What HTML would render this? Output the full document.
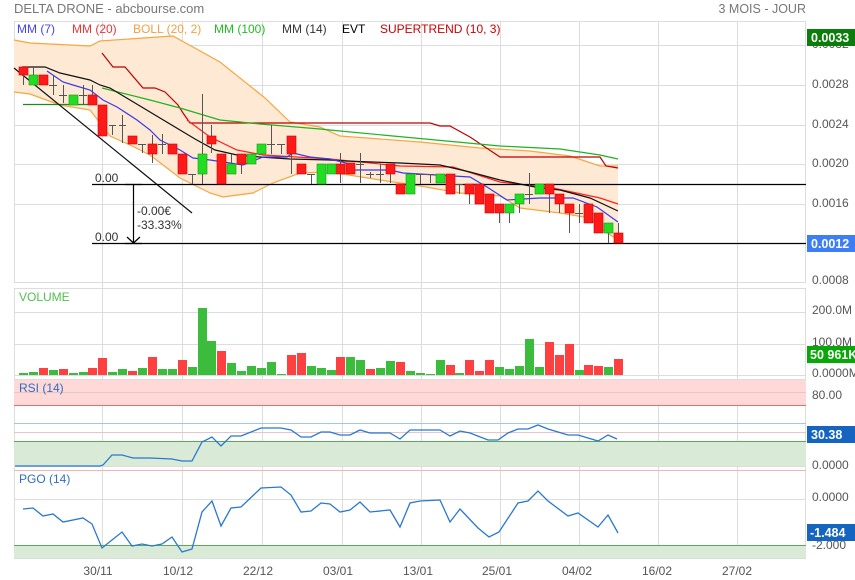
<!DOCTYPE html>
<html><head><meta charset="utf-8"><style>
html,body{margin:0;padding:0;background:#fff;width:855px;height:580px;overflow:hidden}
svg{display:block;font-family:"Liberation Sans",sans-serif}
</style></head><body>
<svg width="855" height="580" viewBox="0 0 855 580" xmlns="http://www.w3.org/2000/svg">
<text x="14" y="13" font-size="13" fill="#777">DELTA DRONE - abcbourse.com</text>
<text x="806" y="13" font-size="12.5" fill="#777" text-anchor="end">3 MOIS - JOUR</text>

<!-- grids -->
<g stroke="#ddd" stroke-width="1" fill="none">
<rect x="14.5" y="21.5" width="791" height="261"/>
<path d="M14 45.5H806M14 85.5H806M14 125.5H806M14 164.5H806M14 204.5H806"/>
<path d="M14 288.5H806M14 312.5H806M14 344.5H806M14 375.5H806"/>
<path d="M14 379.5H806M14 432.5H806M14 466.5H806"/>
<path d="M14 499.5H806M14 558.5H806"/>
<path d="M102.5 21V558M182.5 21V558M262.5 21V558M342.5 21V558M421.5 21V558M500.5 21V558M579.5 21V558M658.5 21V558M737.5 21V558M14.5 288V558M805.5 288V558"/>
</g>

<!-- bollinger -->
<path d="M14,40 30,43 90,46 100,41 173,36 220,62 265,98 290,122 320,127 340,136 420,142 480,148 530,151 570,156 600,166 618,166 L618,240 600,228 590,218 560,213 520,208 500,196 460,193 420,186 380,180 330,172 300,173 273,183 253,193 223,197 210,193 192,184 180,178 150,155 130,145 110,136 100,123 90,110 60,105 30,94 14,92Z" fill="#fde9d4"/>
<g fill="none" stroke-width="1.2">
<polyline stroke="#f7a640" points="14,40 30,43 90,46 100,41 173,36 220,62 265,98 290,122 320,127 340,136 420,142 480,148 530,151 570,156 600,166 618,166"/>
<polyline stroke="#f7a640" points="14,92 30,94 60,105 90,110 100,123 110,136 130,145 150,155 180,178 192,184 210,193 223,197 253,193 273,183 300,173 330,172 380,180 420,186 460,193 500,196 520,208 560,213 590,218 600,228 618,240"/>
<polyline stroke="#c00000" points="102,53 113,67 125,67 143,88 155,88 165,92 178,105 183,113 190,123 430,123 440,126 450,126 470,137 500,157 600,157 606,166 618,168"/>
<polyline stroke="#1fb31f" points="102,88 150,100 180,108 220,120 260,124 320,129 340,131 500,146 560,149 600,155 618,159"/>
<polyline stroke="#ff2020" points="187,120 210,137 237,150 263,155 330,159 400,166 453,167 500,182 553,188 600,198 618,204"/>
<polyline stroke="#111" points="22,67 45,67 60,73 90,80 100,85 110,88 150,112 195,139 215,150 237,155 260,157 290,159 330,160 345,161 400,163 440,165 470,172 500,180 540,188 560,190 590,198 618,211"/>
<polyline stroke="#3a3ae8" points="47,71 63,82 73,85 90,90 103,100 117,107 137,120 150,130 160,140 180,150 193,158 210,160 230,163 243,165 263,157 287,157 293,153 310,157 330,159 350,164 353,170 390,170 403,173 470,177 487,187 507,200 540,198 573,198 597,207 618,222"/>
<line x1="23" y1="104.5" x2="92" y2="104.5" stroke="#1a8a1a"/>
<line x1="14" y1="68" x2="192" y2="213" stroke="#111"/>
<path d="M92 184.5H806M92 243.5H806" stroke="#000" stroke-width="1.2"/>
<path d="M133.5 184V243M125 184.5H142M125 243.5H142M127 237L133.5 243L140 237" stroke="#000"/>
</g>
<text x="95" y="182" font-size="12" fill="#333">0.00</text>
<text x="95" y="241" font-size="12" fill="#333">0.00</text>
<text x="137" y="215" font-size="12" fill="#333">-0.00€</text>
<text x="137" y="229" font-size="12" fill="#333">-33.33%</text>

<!-- candles -->
<g stroke="#555" stroke-width="1">
<path d="M23.5 67V85M33.5 67V85M43.5 75V85M53.5 75V95M63.5 85V103M73.5 95V105M83.5 85V105M92.5 85V105M102.5 105V136M112.5 125V135M122.5 115V143M132.5 136V144M142.5 144V153M152.5 135V163M162.5 134V154M172.5 144V154M182.5 154V174M192.5 174V184M202.5 94V184M211.5 125V153M221.5 154V184M231.5 154V174M241.5 154V174M251.5 154V164M261.5 144V154M271.5 125V154M281.5 144V154M291.5 136V174M301.5 164V174M311.5 174V184M321.5 164V184M331.5 164V174M340.5 153V183M350.5 163V174M360.5 153V183M370.5 172V178M380.5 164V183M390.5 164V183M400.5 184V194M410.5 174V194M420.5 174V184M430.5 174V183M440.5 174V183M450.5 174V194M459.5 184V194M469.5 184V204M479.5 184V204M489.5 194V213M499.5 204V223M509.5 204V223M519.5 194V213M529.5 173V204M539.5 184V194M549.5 184V213M559.5 194V213M569.5 204V233M579.5 204V223M588.5 204V223M598.5 213V233M608.5 223V243M618.5 223V243"/>
<path d="M109 125.5H116M119 125.5H126M138 144.5H146M158 144.5H166M188 174.5H196M267 144.5H275M277 144.5H285M307 174.5H315M356 164.5H364M366 174.5H374M376 174.5H384M416 174.5H424M426 174.5H434M455 184.5H463M525 194.5H533M575 213.5H583M49 85.5H57M59 95.5H67M79 95.5H87"/>
</g>
<g fill="#ff1a1a" stroke="#c00" stroke-width="0.6">
<rect x="19" y="67" width="9" height="8"/><rect x="39" y="75" width="9" height="10"/><rect x="88" y="95" width="9" height="10"/><rect x="98" y="105" width="9" height="31"/><rect x="128" y="136" width="9" height="8"/><rect x="148" y="144" width="9" height="10"/><rect x="168" y="144" width="9" height="10"/><rect x="178" y="154" width="9" height="20"/><rect x="207" y="136" width="9" height="8"/><rect x="217" y="154" width="9" height="30"/><rect x="237" y="154" width="9" height="10"/><rect x="287" y="136" width="9" height="18"/><rect x="297" y="164" width="9" height="10"/><rect x="336" y="164" width="9" height="10"/><rect x="346" y="163" width="9" height="11"/><rect x="386" y="164" width="9" height="10"/><rect x="396" y="184" width="9" height="10"/><rect x="446" y="174" width="9" height="20"/><rect x="465" y="184" width="9" height="10"/><rect x="475" y="184" width="9" height="20"/><rect x="485" y="194" width="9" height="19"/><rect x="495" y="204" width="9" height="9"/><rect x="545" y="184" width="9" height="10"/><rect x="555" y="194" width="9" height="10"/><rect x="565" y="204" width="9" height="9"/><rect x="584" y="204" width="9" height="19"/><rect x="594" y="213" width="9" height="20"/><rect x="614" y="233" width="9" height="10"/>
</g>
<g fill="#22dd22" stroke="#169a16" stroke-width="0.6">
<rect x="29" y="75" width="9" height="10"/><rect x="69" y="95" width="9" height="10"/><rect x="198" y="154" width="9" height="20"/><rect x="227" y="164" width="9" height="10"/><rect x="247" y="154" width="9" height="10"/><rect x="257" y="144" width="9" height="10"/><rect x="317" y="164" width="9" height="20"/><rect x="327" y="164" width="9" height="10"/><rect x="406" y="174" width="9" height="20"/><rect x="436" y="174" width="9" height="9"/><rect x="505" y="204" width="9" height="9"/><rect x="515" y="194" width="9" height="10"/><rect x="535" y="184" width="9" height="10"/><rect x="604" y="223" width="9" height="10"/>
</g>

<!-- legend -->
<g font-size="12">
<text x="17" y="33" fill="#4444ee">MM (7)</text>
<text x="72" y="33" fill="#ee3333">MM (20)</text>
<text x="133" y="33" fill="#f5a040">BOLL (20, 2)</text>
<text x="214" y="33" fill="#22bb22">MM (100)</text>
<text x="282" y="33" fill="#333">MM (14)</text>
<text x="342" y="33" fill="#000">EVT</text>
<text x="380" y="33" fill="#cc0000">SUPERTREND (10, 3)</text>
</g>

<!-- volume -->
<text x="19" y="301" font-size="12" fill="#50c050">VOLUME</text>
<g fill="#3cbc3c">
<rect x="19" y="373" width="9" height="2"/><rect x="29" y="372" width="9" height="3"/><rect x="49" y="370" width="9" height="5"/><rect x="69" y="373" width="9" height="2"/><rect x="79" y="372" width="9" height="3"/><rect x="108" y="372" width="9" height="3"/><rect x="118" y="369" width="9" height="6"/><rect x="138" y="368" width="9" height="7"/><rect x="158" y="369" width="9" height="6"/><rect x="168" y="369" width="9" height="6"/><rect x="188" y="367" width="9" height="8"/><rect x="198" y="308" width="9" height="67"/><rect x="207" y="341" width="9" height="34"/><rect x="227" y="363" width="9" height="12"/><rect x="237" y="371" width="9" height="4"/><rect x="247" y="366" width="9" height="9"/><rect x="257" y="368" width="9" height="7"/><rect x="267" y="362" width="9" height="13"/><rect x="277" y="374" width="9" height="1"/><rect x="307" y="366" width="9" height="9"/><rect x="317" y="368" width="9" height="7"/><rect x="327" y="370" width="9" height="5"/><rect x="346" y="357" width="9" height="18"/><rect x="356" y="360" width="9" height="15"/><rect x="376" y="368" width="9" height="7"/><rect x="386" y="361" width="9" height="14"/><rect x="406" y="371" width="9" height="4"/><rect x="416" y="373" width="9" height="2"/><rect x="426" y="374" width="9" height="1"/><rect x="436" y="360" width="9" height="15"/><rect x="455" y="373" width="9" height="2"/><rect x="495" y="367" width="9" height="8"/><rect x="505" y="369" width="9" height="6"/><rect x="515" y="366" width="9" height="9"/><rect x="525" y="339" width="9" height="36"/><rect x="535" y="367" width="9" height="8"/><rect x="575" y="370" width="9" height="5"/><rect x="604" y="367" width="9" height="8"/>
</g>
<g fill="#ff4040">
<rect x="39" y="368" width="9" height="7"/><rect x="59" y="369" width="9" height="6"/><rect x="88" y="368" width="9" height="7"/><rect x="98" y="358" width="9" height="17"/><rect x="128" y="371" width="9" height="4"/><rect x="148" y="357" width="9" height="18"/><rect x="178" y="360" width="9" height="15"/><rect x="217" y="351" width="9" height="24"/><rect x="287" y="355" width="9" height="20"/><rect x="297" y="353" width="9" height="22"/><rect x="336" y="357" width="9" height="18"/><rect x="366" y="369" width="9" height="6"/><rect x="396" y="362" width="9" height="13"/><rect x="446" y="365" width="9" height="10"/><rect x="465" y="360" width="9" height="15"/><rect x="475" y="371" width="9" height="4"/><rect x="485" y="360" width="9" height="15"/><rect x="545" y="342" width="9" height="33"/><rect x="555" y="355" width="9" height="20"/><rect x="565" y="344" width="9" height="31"/><rect x="584" y="365" width="9" height="10"/><rect x="594" y="366" width="9" height="9"/><rect x="614" y="359" width="9" height="16"/>
</g>

<!-- RSI -->
<rect x="14" y="380" width="792" height="25" fill="#ffd8d8"/>
<rect x="14" y="441" width="792" height="25" fill="#d9ead7"/>
<g stroke-width="1">
<path d="M14 392.5H806M14 432.5H806" stroke="#e6c6c6"/>
<path d="M14 405.5H806" stroke="#f06868"/>
<path d="M14 423.5H806" stroke="#9cc8f4"/>
<path d="M14 441.5H806" stroke="#5aa85a"/>
</g>
<text x="19" y="392" font-size="12" fill="#2d6fc4">RSI (14)</text>
<polyline fill="none" stroke="#2a78d0" stroke-width="1.3" points="15,466 100,466 103,465 112,455 122,455 133,458 150,458 172,459 182,461 192,461 202,442 212,437 221,446 231,436 241,436 261,428 281,428 291,430 301,437 311,437 321,432 330,432 340,435 350,435 360,430 370,433 390,433 400,439 410,430 440,430 450,436 460,431 470,433 488,440 498,440 508,433 518,429 528,429 538,425 548,429 558,432 568,435 578,435 588,438 598,441 608,435 617,439"/>

<!-- PGO -->
<rect x="14" y="545" width="792" height="13" fill="#d9ead7"/>
<path d="M14 470.5H806" stroke="#f0b4b4"/>
<path d="M14 545.5H806" stroke="#5aa85a"/>
<text x="19" y="483" font-size="12" fill="#2d6fc4">PGO (14)</text>
<polyline fill="none" stroke="#2a78d0" stroke-width="1.3" points="23,509 33,508 43,516 53,514 63,522 83,518 92,524 102,548 112,540 122,532 132,546 142,544 152,546 162,544 172,537 182,552 192,549 202,512 212,501 221,526 231,508 241,507 261,488 281,487 291,495 301,512 311,511 321,503 330,504 340,512 350,510 360,502 370,512 390,510 400,527 410,503 420,501 440,500 450,522 460,509 478,528 489,537 499,532 518,503 528,501 538,491 548,501 568,516 578,513 598,527 608,515 618,533"/>

<!-- right axis -->
<g font-size="12" fill="#555">
<text x="812" y="48">0.0032</text>
<text x="812" y="88">0.0028</text>
<text x="812" y="128">0.0024</text>
<text x="812" y="167">0.0020</text>
<text x="812" y="207">0.0016</text>
<text x="812" y="284">0.0008</text>
<text x="812" y="314">200.0M</text>
<text x="812" y="346">100.0M</text>
<text x="812" y="377">0.0000M</text>
<text x="812" y="399">80.00</text>
<text x="812" y="438">40.00</text>
<text x="812" y="469">0.0000</text>
<text x="812" y="501">0.0000</text>
<text x="812" y="549">-2.000</text>
</g>
<rect x="807" y="29" width="48" height="17" fill="#0b7d0b"/>
<text x="811" y="42" font-size="12.5" font-weight="bold" fill="#fff">0.0033</text>
<rect x="807" y="235" width="48" height="17" fill="#3d7ef5"/>
<text x="811" y="248" font-size="12.5" font-weight="bold" fill="#fff">0.0012</text>
<rect x="807" y="346" width="48" height="17" fill="#07a807"/>
<text x="810" y="359" font-size="12.5" font-weight="bold" fill="#fff">50 961K</text>
<rect x="807" y="426" width="48" height="17" fill="#1565c0"/>
<text x="811" y="439" font-size="12.5" font-weight="bold" fill="#fff">30.38</text>
<rect x="807" y="524" width="48" height="17" fill="#1565c0"/>
<text x="810" y="537" font-size="12.5" font-weight="bold" fill="#fff">-1.484</text>

<!-- dates -->
<g font-size="12" fill="#555" text-anchor="middle">
<text x="98" y="575">30/11</text>
<text x="178" y="575">10/12</text>
<text x="258" y="575">22/12</text>
<text x="338" y="575">03/01</text>
<text x="418" y="575">13/01</text>
<text x="497" y="575">25/01</text>
<text x="577" y="575">04/02</text>
<text x="657" y="575">16/02</text>
<text x="737" y="575">27/02</text>
</g>
</svg>
</body></html>
